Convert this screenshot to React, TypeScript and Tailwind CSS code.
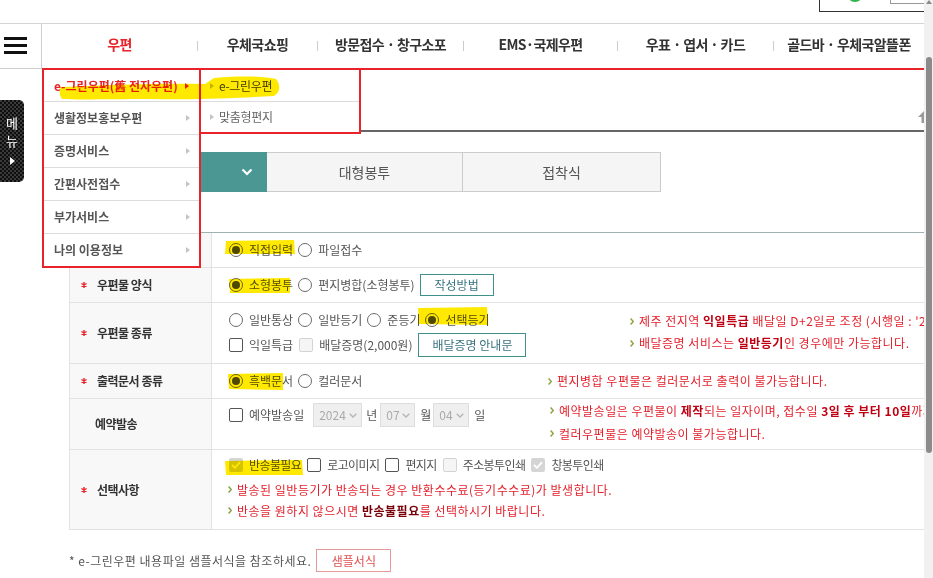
import React from 'react';

function Radio({ checked = false }: { checked?: boolean }) {
  return (
    <span className="flex h-[14px] w-[14px] shrink-0 items-center justify-center rounded-full border border-[#6b6b6b] bg-white">
      {checked && <span className="h-[8px] w-[8px] rounded-full bg-[#4f4f4f]" />}
    </span>
  );
}

type BoxKind = 'normal' | 'disabled' | 'checkedDisabled';
function Box({ kind = 'normal' }: { kind?: BoxKind }) {
  if (kind === 'disabled')
    return <span className="block h-[14px] w-[14px] shrink-0 rounded-[2px] border border-[#d4d4d4] bg-[#f5f5f5]" />;
  if (kind === 'checkedDisabled')
    return (
      <span className="flex h-[14px] w-[14px] shrink-0 items-center justify-center rounded-[2px] bg-[#d5d5d5]">
        <svg width="10" height="8" viewBox="0 0 10 8">
          <path d="M1 4 L4 6.8 L9 1.2" stroke="#fff" strokeWidth="1.8" fill="none" />
        </svg>
      </span>
    );
  return <span className="block h-[14px] w-[14px] shrink-0 rounded-[2px] border border-[#555] bg-white" />;
}

function Opt({ control, children }: { control: React.ReactNode; children: React.ReactNode }) {
  return (
    <span className="flex items-center gap-[6px] whitespace-nowrap">
      {control}
      <span>{children}</span>
    </span>
  );
}

function Star() {
  return (
    <span className="flex w-[16px] shrink-0 items-center">
      <svg width="6" height="6" viewBox="0 0 6 6">
        <path d="M3 0V6M0.4 1.5L5.6 4.5M0.4 4.5L5.6 1.5" stroke="#e8232a" strokeWidth="1.4" />
      </svg>
    </span>
  );
}

function Label({ children, req = true }: { children: React.ReactNode; req?: boolean }) {
  return (
    <div className="flex w-[143px] shrink-0 items-center border-x border-[#e2e2e2] bg-[#f8f8f8] pl-[11px] text-[12px] font-bold tracking-[-0.5px] text-[#333]">
      {req ? <Star /> : <span className="w-[14px] shrink-0" />}
      <span>{children}</span>
    </div>
  );
}

function Note({ children }: { children: React.ReactNode }) {
  return (
    <div className="flex items-center gap-[5px] whitespace-nowrap text-[12px] tracking-[0.5px] text-[#e4202c]">
      <svg width="4" height="7" viewBox="0 0 4 7" className="shrink-0">
        <path d="M0.6 0.6 L3.3 3.5 L0.6 6.4" stroke="#8da23c" strokeWidth="1.5" fill="none" />
      </svg>
      <span>{children}</span>
    </div>
  );
}

function B({ children }: { children: React.ReactNode }) {
  return <b className="font-bold text-[#c00012]">{children}</b>;
}

function Sel({ value, w }: { value: string; w: string }) {
  return (
    <span className={`flex h-[24px] items-center justify-between border border-[#dedede] bg-[#efefef] pl-[5px] pr-[4px] text-[12px] tracking-[0px] text-[#aaa] ${w}`}>
      <span>{value}</span>
      <svg width="8" height="5" viewBox="0 0 8 5">
        <path d="M0.7 0.7 L4 4 L7.3 0.7" stroke="#b5b5b5" strokeWidth="1.3" fill="none" />
      </svg>
    </span>
  );
}

function TealBtn({ children, w }: { children: React.ReactNode; w: string }) {
  return (
    <span className={`flex items-center justify-center border border-[#3f8f8a] bg-white text-[12px] tracking-[0px] text-[#37717f] ${w}`}>
      {children}
    </span>
  );
}

function MenuArrow({ red = false }: { red?: boolean }) {
  return (
    <span
      className={
        red
          ? 'block h-0 w-0 shrink-0 border-y-[3px] border-l-[4px] border-y-transparent border-l-[#e8232a]'
          : 'block h-0 w-0 shrink-0 border-y-[3px] border-l-[4px] border-y-transparent border-l-[#c4c4c4]'
      }
    />
  );
}

export default function App() {
  const navItems: { t: string; w: string; red?: boolean }[] = [
    { t: '우편', w: 'w-[155px]', red: true },
    { t: '우체국쇼핑', w: 'w-[119px]' },
    { t: '방문접수 · 창구소포', w: 'w-[145px]' },
    { t: 'EMS·국제우편', w: 'w-[153px]' },
    { t: '우표 · 엽서 · 카드', w: 'w-[155px]' },
    { t: '골드바 · 우체국알뜰폰', w: 'flex-1' },
  ];
  const menu = ['생활정보홍보우편', '증명서비스', '간편사전접수', '부가서비스'];

  return (
    <div className="relative flex h-[578px] w-[933px] overflow-hidden bg-white font-['Noto_Sans_CJK_KR','Noto_Sans',sans-serif] text-[#555]">
      {/* page */}
      <div className="w-[924px] shrink-0 overflow-hidden">
        {/* top strip */}
        <div className="flex h-[24px] justify-end border-b border-[#d4d4d4]">
          <div className="flex h-[12px] w-[105px] items-start border-b border-l border-[#333]">
            <span className="ml-[27px] mt-[-14px] block h-[16px] w-[16px] rounded-full bg-[#2fb34c]" />
            <span className="ml-auto block h-[4px] w-[34px] border-b border-l border-[#999]" />
          </div>
        </div>

        {/* nav */}
        <div className="flex h-[46px] items-start">
          <div className="flex h-[45px] w-[42px] shrink-0 flex-col gap-[4px] border-b border-r border-[#cfcfcf] pl-[4px] pt-[13px]">
            <span className="block h-[3px] w-[23px] bg-[#111]" />
            <span className="block h-[3px] w-[23px] bg-[#111]" />
            <span className="block h-[3px] w-[23px] bg-[#111]" />
          </div>
          <div className="flex h-[46px] flex-1 items-center border-b-2 border-[#e8232a]">
            {navItems.map((n, i) => (
              <React.Fragment key={n.t}>
                {i > 0 && <span className="block h-[10px] w-px shrink-0 bg-[#cccccc]" />}
                <span
                  className={
                    n.red
                      ? `flex h-full items-center justify-center pb-[3px] text-[14px] font-bold tracking-[-0.6px] text-[#e8232a] ${n.w}`
                      : `flex h-full items-center justify-center whitespace-nowrap pb-[3px] text-[14px] font-bold tracking-[-0.6px] text-[#333] ${n.w}`
                  }
                >
                  {n.t}
                </span>
              </React.Fragment>
            ))}
          </div>
        </div>

        {/* main */}
        <div className="pl-[69px]">
          <div className="flex h-[62px] items-end justify-end border-b-2 border-[#666] pb-[7px]">
            <svg width="14" height="12" viewBox="0 0 14 12" className="mr-[-7px]">
              <path d="M7 0 L13 6 L9.5 6 L9.5 12 L4.5 12 L4.5 6 L1 6 Z" fill="#9a9a9a" />
            </svg>
          </div>

          {/* tabs */}
          <div className="mt-[20px] flex h-[40px]">
            <div className="relative flex w-[198px] items-center justify-center bg-[#4a9794] text-[14px] text-white">
              <span>소형봉투</span>
              <svg width="12" height="8" viewBox="0 0 12 8" className="absolute left-[172px] top-[16px]">
                <path d="M1.5 1.5 L6 6 L10.5 1.5" stroke="#fff" strokeWidth="2.2" fill="none" />
              </svg>
            </div>
            <div className="flex w-[196px] items-center justify-center border-y border-r border-[#cccccc] bg-[#f5f5f5] text-[14px] tracking-[0px] text-[#555]">
              대형봉투
            </div>
            <div className="flex w-[198px] items-center justify-center border-y border-r border-[#cccccc] bg-[#f5f5f5] text-[14px] tracking-[0px] text-[#555]">
              접착식
            </div>
          </div>

          {/* table */}
          <div className="mt-[40px] w-[900px] border-t border-[#9fb1b1] text-[12px] leading-[20px] tracking-[0px] text-[#555]">
            {/* row 1 */}
            <div className="flex h-[35px] border-b border-[#e2e2e2]">
              <div className="w-[143px] shrink-0 border-x border-[#e2e2e2] bg-[#f8f8f8]" />
              <div className="flex items-center gap-[5px] pl-[17px]">
                <Opt control={<Radio checked />}>직접입력</Opt>
                <Opt control={<Radio />}>파일접수</Opt>
              </div>
            </div>
            {/* row 2 */}
            <div className="flex h-[35px] border-b border-[#e2e2e2]">
              <Label>우편물 양식</Label>
              <div className="flex items-center gap-[5px] pl-[17px]">
                <Opt control={<Radio checked />}>소형봉투</Opt>
                <Opt control={<Radio />}>편지병합(소형봉투)</Opt>
                <TealBtn w="h-[22px] w-[74px]">작성방법</TealBtn>
              </div>
            </div>
            {/* row 3 */}
            <div className="flex h-[61px] border-b border-[#e2e2e2]">
              <Label>우편물 종류</Label>
              <div className="flex items-start pl-[17px]">
                <div className="flex w-[401px] shrink-0 flex-col gap-[3px] pt-[7px]">
                  <div className="flex h-[20px] items-center gap-[5px]">
                    <Opt control={<Radio />}>일반통상</Opt>
                    <Opt control={<Radio />}>일반등기</Opt>
                    <Opt control={<Radio />}>준등기</Opt>
                    <Opt control={<Radio checked />}>선택등기</Opt>
                  </div>
                  <div className="flex h-[24px] items-center gap-[6px]">
                    <Opt control={<Box />}>익일특급</Opt>
                    <Opt control={<Box kind="disabled" />}>배달증명(2,000원)</Opt>
                    <TealBtn w="h-[24px] w-[108px]">배달증명 안내문</TealBtn>
                  </div>
                </div>
                <div className="flex flex-col pt-[7px] leading-[22px]">
                  <Note>
                    제주 전지역 <B>익일특급</B> 배달일 D+2일로 조정 (시행일 : '24.7.1.~)
                  </Note>
                  <Note>
                    배달증명 서비스는 <B>일반등기</B>인 경우에만 가능합니다.
                  </Note>
                </div>
              </div>
            </div>
            {/* row 4 */}
            <div className="flex h-[35px] border-b border-[#e2e2e2]">
              <Label>출력문서 종류</Label>
              <div className="flex items-center pl-[17px]">
                <div className="flex w-[319px] shrink-0 items-center gap-[5px]">
                  <Opt control={<Radio checked />}>흑백문서</Opt>
                  <Opt control={<Radio />}>컬러문서</Opt>
                </div>
                <Note>편지병합 우편물은 컬러문서로 출력이 불가능합니다.</Note>
              </div>
            </div>
            {/* row 5 */}
            <div className="flex h-[51px] border-b border-[#e2e2e2]">
              <Label req={false}>예약발송</Label>
              <div className="flex items-start pl-[17px]">
                <div className="mt-[4px] flex h-[24px] w-[321px] shrink-0 items-center">
                  <Opt control={<Box />}>예약발송일</Opt>
                  <span className="ml-[9px]">
                    <Sel value="2024" w="w-[49px]" />
                  </span>
                  <span className="ml-[4px]">년</span>
                  <span className="ml-[3px]">
                    <Sel value="07" w="w-[35px]" />
                  </span>
                  <span className="ml-[5px]">월</span>
                  <span className="ml-[2px]">
                    <Sel value="04" w="w-[36px]" />
                  </span>
                  <span className="ml-[5px]">일</span>
                </div>
                <div className="flex flex-col leading-[23px]">
                  <Note>
                    예약발송일은 우편물이 <B>제작</B>되는 일자이며, 접수일 <B>3일 후 부터 10일</B>까지 선택 가능합니다.
                  </Note>
                  <Note>컬러우편물은 예약발송이 불가능합니다.</Note>
                </div>
              </div>
            </div>
            {/* row 6 */}
            <div className="flex h-[80px] border-b border-[#e2e2e2]">
              <Label>선택사항</Label>
              <div className="flex flex-col pl-[16px] pt-[5px]">
                <div className="flex h-[20px] items-center gap-[6px] pl-[1px] tracking-[-0.6px]">
                  <Opt control={<Box kind="checkedDisabled" />}>반송불필요</Opt>
                  <Opt control={<Box />}>로고이미지</Opt>
                  <Opt control={<Box />}>편지지</Opt>
                  <Opt control={<Box kind="disabled" />}>주소봉투인쇄</Opt>
                  <Opt control={<Box kind="checkedDisabled" />}>창봉투인쇄</Opt>
                </div>
                <div className="mt-[4px] flex flex-col leading-[21px]">
                  <Note>발송된 일반등기가 반송되는 경우 반환수수료(등기수수료)가 발생합니다.</Note>
                  <Note>
                    반송을 원하지 않으시면 <b className="font-bold text-[#7a0008]">반송불필요</b>를 선택하시기 바랍니다.
                  </Note>
                </div>
              </div>
            </div>
          </div>

          {/* footer */}
          <div className="mt-[19px] flex items-center gap-[5px] text-[12px] tracking-[0.5px] text-[#555]">
            <span>* e-그린우편 내용파일 샘플서식을 참조하세요.</span>
            <span className="flex h-[23px] w-[75px] items-center justify-center border border-[#e79a9a] bg-white text-[12px] tracking-[0px] text-[#e0504f]">
              샘플서식
            </span>
          </div>
        </div>
      </div>

      {/* scrollbar */}
      <div className="flex w-[9px] shrink-0 flex-col items-center bg-[#f1f1f1]">
        <span className="block h-0 w-0 border-x-[3px] border-b-[4px] border-x-transparent border-b-[#8a8a8a]" />
        <span className="mt-[53px] block h-[396px] w-[6px] rounded-full bg-[#8b8b8b]" />
      </div>

      {/* side tab */}
      <div className="absolute left-0 top-[100px] flex h-[82px] w-[24px] flex-col items-center rounded-r-[5px] bg-[#1c1c1c] bg-[image:repeating-conic-gradient(#0e0e0e_0_25%,#3a3a3a_0_50%)] bg-size-[4px_4px] pt-[14px] text-[13px] leading-[18px] text-white">
        <span>메</span>
        <span>뉴</span>
        <span className="mt-[7px] block h-0 w-0 border-y-[4px] border-l-[5px] border-y-transparent border-l-white" />
      </div>

      {/* dropdown */}
      <div className="absolute left-[42px] top-[68px] h-[200px] w-[159px] border-2 border-[#e8232a] bg-white text-[12px] font-bold tracking-[0px] text-[#555]">
        <div className="flex h-[32px] items-center justify-between border-b border-[#dcdcdc] pl-[10px] pr-[10px] text-[#e8232a]">
          <span className="whitespace-nowrap">e-그린우편(舊 전자우편)</span>
          <MenuArrow red />
        </div>
        {menu.map((m) => (
          <div key={m} className="flex h-[33px] items-center justify-between border-b border-[#dcdcdc] pl-[10px] pr-[9px]">
            <span>{m}</span>
            <MenuArrow />
          </div>
        ))}
        <div className="flex h-[32px] items-center justify-between pl-[10px] pr-[9px]">
          <span>나의 이용정보</span>
          <MenuArrow />
        </div>
      </div>

      {/* submenu */}
      <div className="absolute left-[199px] top-[68px] h-[66px] w-[162px] border-2 border-[#e8232a] bg-white text-[12px] tracking-[-0.3px] text-[#555]">
        <div className="flex h-[32px] items-center gap-[5px] border-b border-[#dcdcdc] pl-[9px]">
          <MenuArrow />
          <span className="text-[#444]">e-그린우편</span>
        </div>
        <div className="flex h-[30px] items-center gap-[5px] pl-[9px]">
          <MenuArrow />
          <span className="text-[#666]">맞춤형편지</span>
        </div>
      </div>

      {/* marker highlights */}
      <svg
        className="pointer-events-none absolute left-0 top-0 mix-blend-multiply"
        width="933"
        height="578"
        viewBox="0 0 933 578"
      >
        <g fill="#ffe900">
          <path d="M61 87 C120 84 180 83 205 84 L214 78 C240 76 265 76 276 79 C281 85 280 93 274 96 C240 98 200 100 150 99 C110 99 80 100 62 99 C59 95 59 90 61 87 Z" />
          <path d="M226 241 L294 240 L295 254 L225 254 Z" />
          <path d="M229 279 L290 278 L290 293 L230 293 Z" />
          <path d="M418 308 L487 307 L488 325 L419 324 Z" />
          <path d="M228 374 L283 373 L283 390 L229 389 Z" />
          <path d="M225 461 L302 460 L303 475 L226 475 Z" />
        </g>
      </svg>
    </div>
  );
}
